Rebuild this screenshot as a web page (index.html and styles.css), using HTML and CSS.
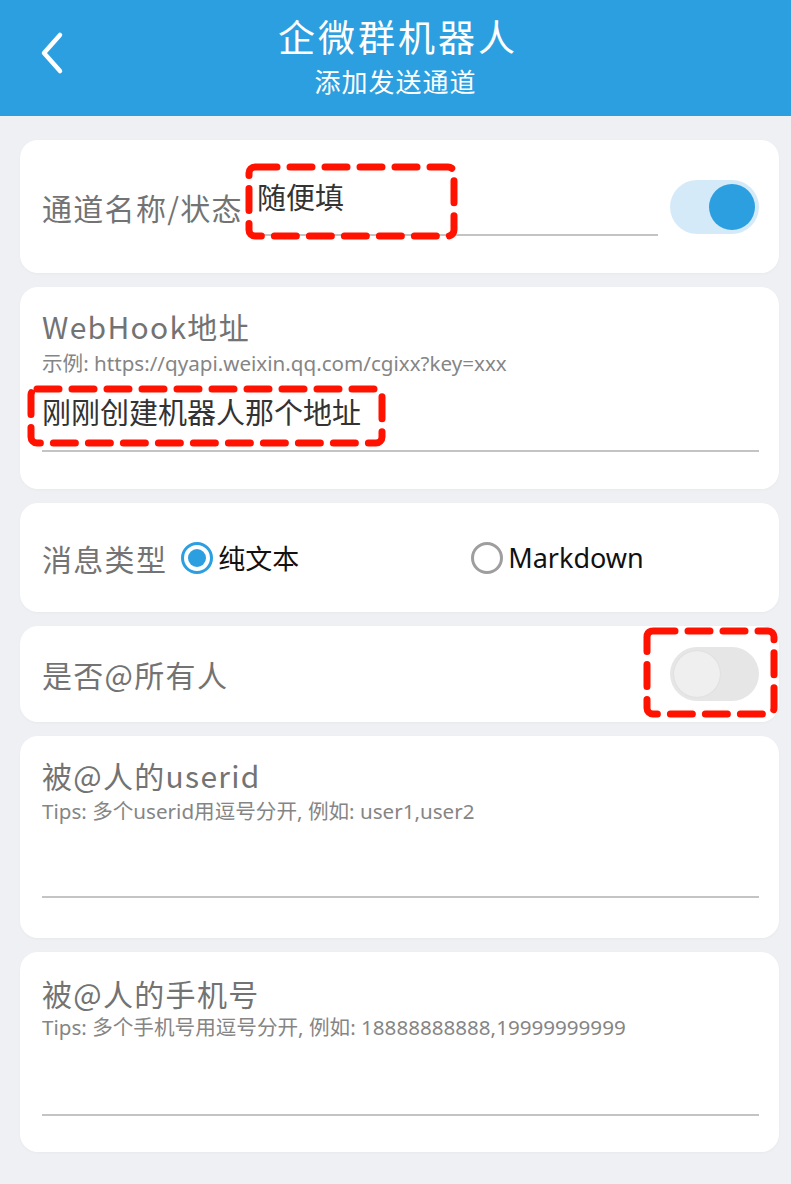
FILE: index.html
```html
<!DOCTYPE html>
<html lang="zh-CN">
<head>
<meta charset="utf-8">
<title>企微群机器人</title>
<link rel="stylesheet" href="styles.css">
</head>
<body>
<header class="appbar">
  <button class="back" aria-label="返回">
    <svg width="28" height="44" viewBox="0 0 28 44"><path d="M22 4 L6 22 L22 40" fill="none" stroke="#fff" stroke-width="4.5" stroke-linecap="round" stroke-linejoin="round"/></svg>
  </button>
  <div class="titles">
    <div class="title">企微群机器人</div>
    <div class="subtitle">添加发送通道</div>
  </div>
</header>

<main class="form">
  <section class="card row name-card">
    <div class="label">通道名称/状态</div>
    <div class="field"><span class="value">随便填</span></div>
    <div class="switch on"><span class="knob"></span></div>
    <svg class="mark mark-name" viewBox="0 0 213 77"><rect x="4" y="4" width="205" height="69" rx="6" ry="6"/></svg>
  </section>

  <section class="card stack webhook-card">
    <div class="label">WebHook地址</div>
    <div class="hint">示例: https://qyapi.weixin.qq.com/cgixx?key=xxx</div>
    <div class="field wide"><span class="value">刚刚创建机器人那个地址</span></div>
    <svg class="mark mark-hook" viewBox="0 0 359 62"><rect x="4" y="4" width="351" height="54" rx="6" ry="6"/></svg>
  </section>

  <section class="card row type-card">
    <div class="label">消息类型</div>
    <div class="radios">
      <label class="radio checked"><span class="dot"></span><span class="rtext">纯文本</span></label>
      <label class="radio"><span class="dot"></span><span class="rtext">Markdown</span></label>
    </div>
  </section>

  <section class="card row at-card">
    <div class="label grow">是否@所有人</div>
    <div class="switch off"><span class="knob"></span></div>
    <svg class="mark mark-at" viewBox="0 0 135 91"><rect x="4" y="4" width="127" height="83" rx="6" ry="6"/></svg>
  </section>

  <section class="card stack multi-card userid-card">
    <div class="label">被@人的userid</div>
    <div class="hint">Tips: 多个userid用逗号分开, 例如: user1,user2</div>
    <div class="field wide tall"></div>
  </section>

  <section class="card stack multi-card phone-card">
    <div class="label">被@人的手机号</div>
    <div class="hint">Tips: 多个手机号用逗号分开, 例如: 18888888888,19999999999</div>
    <div class="field wide tall"></div>
  </section>
</main>
</body>
</html>
```

FILE: styles.css
```css
* { box-sizing: border-box; }
html, body {
  margin: 0;
  padding: 0;
  background: #eff0f4;
  font-family: "Noto Sans", "Noto Sans CJK SC", sans-serif;
  width: 791px;
  height: 1184px;
  overflow: hidden;
}

.appbar {
  height: 116px;
  background: #2b9fe0;
  display: flex;
  align-items: center;
  justify-content: center;
  position: relative;
  color: #fff;
}
.back {
  position: absolute;
  left: 38px;
  top: 31px;
  border: 0;
  background: none;
  padding: 0;
  width: 28px;
  height: 44px;
}
.titles {
  display: flex;
  flex-direction: column;
  align-items: center;
  margin-top: -2px;
}
.title {
  font-family: "Noto Sans CJK SC", sans-serif;
  font-size: 37px;
  line-height: 44px;
  letter-spacing: 3px;
  margin-left: 5px;
}
.subtitle {
  font-family: "Noto Sans CJK SC", sans-serif;
  font-size: 26px;
  line-height: 38px;
  letter-spacing: 1px;
  margin-top: 4px;
}

.form {
  display: flex;
  flex-direction: column;
  gap: 14px;
  padding: 24px 12px 0 20px;
}
.card {
  position: relative;
  background: #fff;
  border-radius: 18px;
  box-shadow: 0 1px 3px rgba(0, 0, 0, 0.03);
  padding: 0 20px 0 22px;
}
.row {
  display: flex;
  align-items: center;
}
.stack {
  display: flex;
  flex-direction: column;
}

.label {
  font-family: "Noto Sans CJK SC", sans-serif;
  font-size: 30px;
  line-height: 36px;
  color: #737373;
  letter-spacing: 1.3px;
  white-space: nowrap;
}
.label.grow { flex: 1; }
.hint {
  font-family: "Noto Sans", "Noto Sans CJK SC", sans-serif;
  font-size: 20.6px;
  line-height: 26px;
  color: #858585;
  white-space: nowrap;
}
.field {
  border-bottom: 2px solid #c4c4c4;
}
.value {
  font-family: "Noto Sans CJK SC", sans-serif;
  font-size: 29px;
  line-height: 36px;
  color: #333;
}

/* card 1 */
.name-card {
  height: 133px;
  gap: 12px;
}
.name-card .field {
  flex: 1;
  height: 58px;
  margin-left: 2px;
}

/* switch */
.switch {
  width: 89px;
  height: 54px;
  border-radius: 27px;
  display: flex;
  align-items: center;
  flex-shrink: 0;
}
.switch .knob {
  width: 46px;
  height: 46px;
  border-radius: 50%;
}
.switch.on {
  background: #d5eaf8;
  justify-content: flex-end;
  padding-right: 4px;
}
.switch.on .knob { background: #2b9fe0; }
.switch.off {
  background: #e6e6e6;
  justify-content: flex-start;
  padding-left: 4px;
}
.switch.off .knob { background: #efefef; box-shadow: 0 0 2px rgba(0,0,0,0.08); }

/* webhook */
.webhook-card {
  height: 202px;
  padding-top: 21px;
}
.webhook-card .hint { margin-top: 6px; }
.field.wide {
  padding-top: 17px;
  height: 76px;
}

/* type */
.type-card {
  height: 109px;
}
.radios {
  flex: 1;
  display: flex;
  margin-left: 14px;
}
.radio {
  display: flex;
  align-items: center;
  gap: 5px;
  font-size: 27px;
  line-height: 36px;
  color: #111;
}
.radio:first-child { width: 290px; }
.radio .dot {
  width: 32px;
  height: 32px;
  border-radius: 50%;
  border: 3px solid #9e9e9e;
  position: relative;
  flex-shrink: 0;
}
.radio.checked .dot {
  border-color: #2b9fe0;
}
.radio.checked .dot::after {
  content: "";
  position: absolute;
  left: 4px;
  top: 4px;
  width: 18px;
  height: 18px;
  border-radius: 50%;
  background: #2b9fe0;
}
.rtext { font-family: "Noto Sans CJK SC", sans-serif; }
.radio:last-child .rtext { font-family: "Noto Sans", sans-serif; }

/* at all */
.at-card {
  height: 96px;
}

/* multi */
.userid-card {
  height: 202px;
  padding-top: 21px;
}
.userid-card .hint { margin-top: 5px; }
.userid-card .field { height: 74px; }
.phone-card {
  height: 200px;
  padding-top: 23px;
}
.phone-card .hint { margin-top: 3px; }
.phone-card .field { height: 76px; }

/* red annotations */
.mark {
  position: absolute;
  overflow: visible;
  fill: none;
}
.mark rect {
  stroke: #ff1200;
  stroke-width: 7;
  stroke-dasharray: 22 13;
  stroke-linecap: round;
}
.mark-name { left: 225px; top: 23px; width: 213px; height: 77px; }
.mark-hook { left: 7px; top: 98px; width: 359px; height: 62px; }
.mark-at { left: 623px; top: 1px; width: 135px; height: 91px; }
```
